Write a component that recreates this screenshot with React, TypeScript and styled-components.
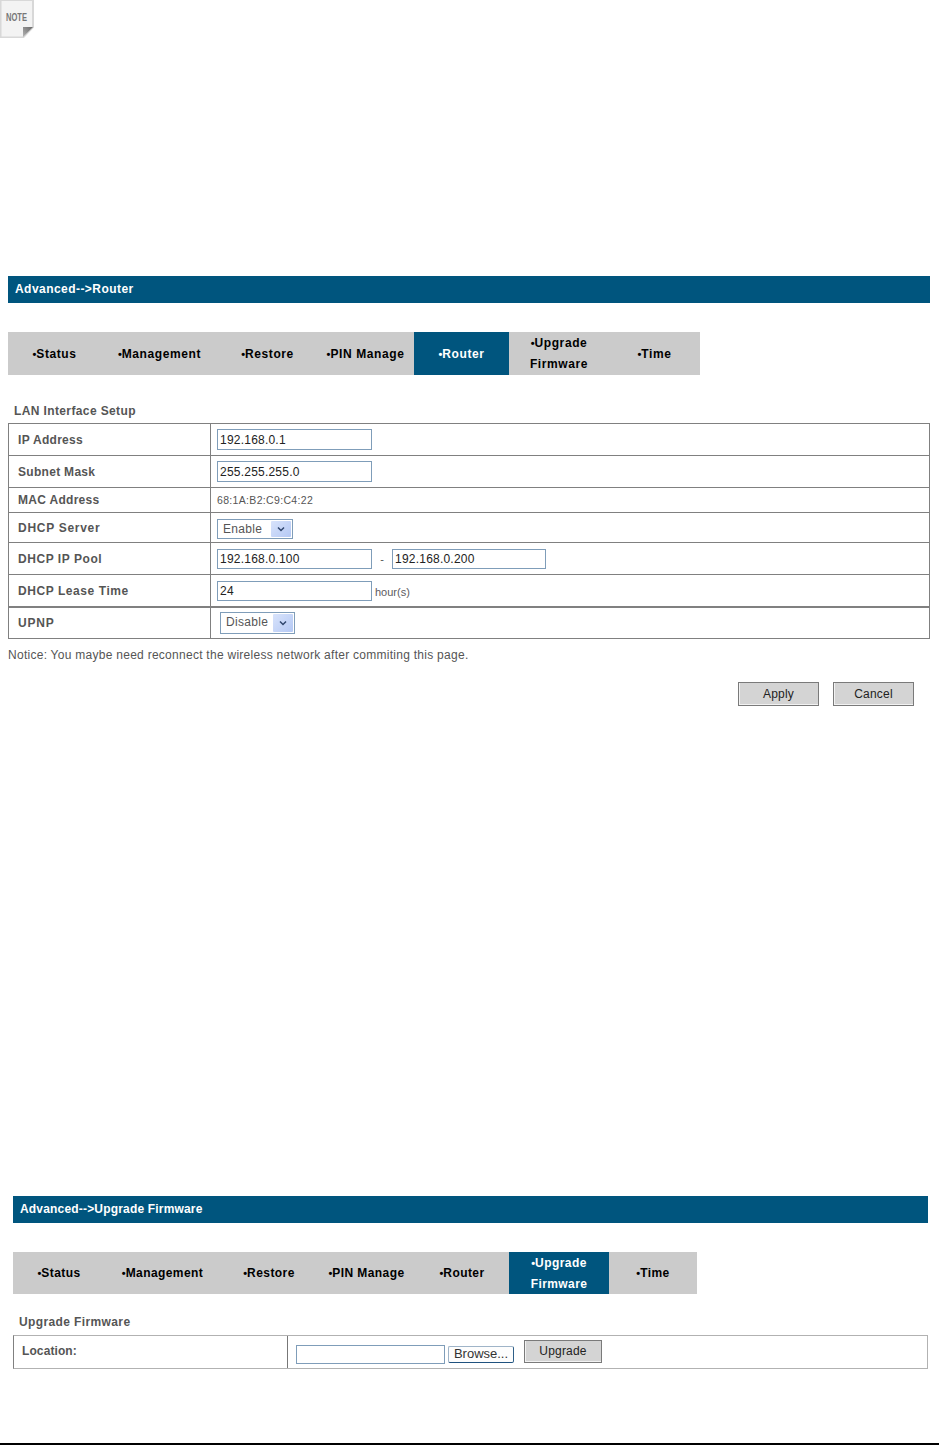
import React from "react";
import styled, { createGlobalStyle } from "styled-components";

const Global = createGlobalStyle`
  html, body { margin: 0; padding: 0; background: #fff; }
  body { font-family: "Liberation Sans", Arial, sans-serif; }
`;

const Page = styled.div`
  width: 939px;
  height: 1445px;
  display: flex;
  flex-direction: column;
  overflow: hidden;
`;

const NoteIcon = styled.svg`
  display: block;
  width: 34px;
  height: 38px;
  flex: none;
`;

const Section = styled.section<{ $left: number; $width: number; $top: number }>`
  margin-left: ${(p) => p.$left}px;
  margin-top: ${(p) => p.$top}px;
  width: ${(p) => p.$width}px;
`;

const Header = styled.div<{ $spacing: number }>`
  height: 27px;
  background: #00557e;
  color: #fff;
  font-size: 12px;
  font-weight: 700;
  line-height: 26px;
  padding-left: 7px;
  letter-spacing: ${(p) => p.$spacing}px;
`;

const TabBar = styled.nav<{ $width: number; $height: number; $spacing: number }>`
  margin-top: 29px;
  width: ${(p) => p.$width}px;
  height: ${(p) => p.$height}px;
  display: flex;
  background: #cbcbcb;
  letter-spacing: ${(p) => p.$spacing}px;
`;

const Tab = styled.div<{ $width: number; $active?: boolean }>`
  box-sizing: border-box;
  width: ${(p) => p.$width}px;
  flex: none;
  display: flex;
  align-items: center;
  justify-content: center;
  padding-top: 1px;
  text-align: center;
  font-size: 12px;
  font-weight: 700;
  line-height: 21px;
  color: ${(p) => (p.$active ? "#fff" : "#000")};
  background: ${(p) => (p.$active ? "#00557e" : "transparent")};
`;

const Bullet = styled.span`
  font-size: 11px;
  letter-spacing: 0;
`;

const SectionLabel = styled.div<{ $top: number; $bottom: number }>`
  margin-top: ${(p) => p.$top}px;
  margin-bottom: ${(p) => p.$bottom}px;
  padding-left: 6px;
  height: 16px;
  line-height: 16px;
  font-size: 12px;
  font-weight: 700;
  letter-spacing: 0.38px;
  color: #555;
`;

const FormTable = styled.div`
  border: 1px solid #808080;
  border-top: none;
`;

const Row = styled.div<{ $height: number; $thick?: boolean }>`
  display: grid;
  grid-template-columns: 202px 1fr;
  box-sizing: border-box;
  height: ${(p) => p.$height}px;
  border-top: ${(p) => (p.$thick ? 2 : 1)}px solid #808080;
`;

const LabelCell = styled.div<{ $spacing?: number }>`
  display: flex;
  align-items: center;
  padding-left: 9px;
  border-right: 1px solid #808080;
  font-size: 12px;
  font-weight: 700;
  letter-spacing: ${(p) => p.$spacing ?? 0.3}px;
  color: #555;
`;

const ValueCell = styled.div<{ $indent?: number }>`
  display: flex;
  align-items: center;
  padding-left: ${(p) => p.$indent ?? 6}px;
  font-size: 12px;
  color: #555;
`;

const TextField = styled.input<{ $width?: number; $height?: number; $top?: number }>`
  box-sizing: border-box;
  width: ${(p) => p.$width ?? 155}px;
  height: ${(p) => p.$height ?? 21}px;
  margin: ${(p) => p.$top ?? 0}px 0 0;
  padding: 0 2px;
  border: 1px solid #7f9db9;
  border-radius: 0;
  outline: none;
  background: #fff;
  font: 12px "Liberation Sans", Arial, sans-serif;
  letter-spacing: 0.22px;
  color: #222;
`;

const MacText = styled.span`
  font-size: 10.5px;
  letter-spacing: 0.33px;
  color: #555;
`;

const Dash = styled.span`
  width: 20px;
  text-align: center;
  font-size: 11px;
  color: #555;
`;

const Unit = styled.span`
  margin: 3px 0 0 3px;
  font-size: 11px;
  color: #5c5a60;
`;

const SelectBox = styled.div<{ $width: number; $height: number; $top: number }>`
  box-sizing: border-box;
  width: ${(p) => p.$width}px;
  height: ${(p) => p.$height}px;
  margin-top: ${(p) => p.$top}px;
  display: flex;
  align-items: stretch;
  justify-content: space-between;
  padding: 1px 1px 1px 5px;
  border: 1px solid #7f9db9;
  font-size: 12px;
  line-height: 16px;
  letter-spacing: 0.3px;
  color: #555;
`;

const SelectArrow = styled.span`
  width: 20px;
  display: flex;
  align-items: center;
  justify-content: center;
  border-radius: 1px;
  background: linear-gradient(135deg, #d8e3fb, #b4c8f4);
`;

const Chevron = styled.svg`
  width: 8px;
  height: 6px;
`;

const Notice = styled.p`
  margin: 8px 0 0;
  height: 16px;
  line-height: 16px;
  font-size: 12px;
  letter-spacing: 0.27px;
  color: #555;
`;

const ActionBar = styled.div`
  margin-top: 19px;
  padding-right: 16px;
  display: flex;
  justify-content: flex-end;
  gap: 14px;
`;

const GreyButton = styled.button<{ $width: number; $top?: number; $left?: number }>`
  box-sizing: border-box;
  width: ${(p) => p.$width}px;
  height: ${(p) => (p.$top ? 23 : 24)}px;
  margin: ${(p) => p.$top ?? 0}px 0 0 ${(p) => p.$left ?? 0}px;
  padding: 0 0 ${(p) => (p.$top ? 2 : 0)}px;
  border: 1px solid #7a7a7a;
  border-radius: 0;
  background: #d4d4d4;
  box-shadow: inset 1px 0 0 #f2f2f2, inset 0 -1px 0 #f2f2f2;
  font: 12px "Liberation Sans", Arial, sans-serif;
  letter-spacing: 0.2px;
  color: #222;
`;

const UpgradeTable = styled.div`
  box-sizing: border-box;
  height: 34px;
  display: grid;
  grid-template-columns: 274px 1fr;
  border: 1px solid #b2b2b2;
  border-left-color: #808080;
`;

const LocationCell = styled.div`
  display: flex;
  align-items: center;
  padding: 0 0 2px 8px;
  border-right: 1px solid #777;
  font-size: 12px;
  font-weight: 700;
  letter-spacing: 0.1px;
  color: #555;
`;

const UploadCell = styled.div`
  display: flex;
  align-items: flex-start;
  padding-left: 8px;
`;

const BrowseButton = styled.button`
  box-sizing: border-box;
  width: 66px;
  height: 17px;
  margin: 10px 0 0 3px;
  padding: 0 0 2px;
  border: 1px solid #9fb4c8;
  border-right-color: #2f5f88;
  border-bottom-color: #1f527f;
  border-radius: 2px;
  background: #fdfdfd;
  font: 13px "Liberation Sans", Arial, sans-serif;
  line-height: 13px;
  color: #333;
`;

const FooterRule = styled.div`
  margin-top: auto;
  height: 2px;
  background: #000;
`;

type TabDef = { label: string[]; width: number };

const routerTabs: TabDef[] = [
  { label: ["Status"], width: 93 },
  { label: ["Management"], width: 117 },
  { label: ["Restore"], width: 99 },
  { label: ["PIN Manage"], width: 97 },
  { label: ["Router"], width: 95 },
  { label: ["Upgrade", "Firmware"], width: 100 },
  { label: ["Time"], width: 91 },
];

const firmwareTabs: TabDef[] = [
  { label: ["Status"], width: 92 },
  { label: ["Management"], width: 115 },
  { label: ["Restore"], width: 98 },
  { label: ["PIN Manage"], width: 97 },
  { label: ["Router"], width: 94 },
  { label: ["Upgrade", "Firmware"], width: 100 },
  { label: ["Time"], width: 88 },
];

const Tabs = ({ tabs, active, width, height, spacing }: { tabs: TabDef[]; active: string; width: number; height: number; spacing: number }) => (
  <TabBar $width={width} $height={height} $spacing={spacing}>
    {tabs.map((t) => (
      <Tab key={t.label[0]} $width={t.width} $active={t.label[0] === active}>
        <span>
          <Bullet>•</Bullet>
          {t.label[0]}
          {t.label[1] && (
            <>
              <br />
              {t.label[1]}
            </>
          )}
        </span>
      </Tab>
    ))}
  </TabBar>
);

const Select = ({ value, width, height, top }: { value: string; width: number; height: number; top: number }) => (
  <SelectBox $width={width} $height={height} $top={top}>
    {value}
    <SelectArrow>
      <Chevron viewBox="0 0 8 6">
        <path d="M1 1.5 L4 4.5 L7 1.5" fill="none" stroke="#30466e" strokeWidth="1.5" />
      </Chevron>
    </SelectArrow>
  </SelectBox>
);

export default function App() {
  return (
    <Page>
      <Global />
      <NoteIcon viewBox="0 0 34 38">
        <defs>
          <linearGradient id="flap" x1="1" y1="0" x2="0" y2="1">
            <stop offset="0" stopColor="#666" />
            <stop offset="1" stopColor="#b5b5b5" />
          </linearGradient>
          <filter id="soft" x="-10%" y="-10%" width="120%" height="120%">
            <feGaussianBlur stdDeviation="0.4" />
          </filter>
        </defs>
        <path d="M0.5 0 H33 V27 L23 37.5 H0.5 Z" fill="#f3f3f3" stroke="#d8d8d8" strokeWidth="2" filter="url(#soft)" />
        <path d="M23 37 L33 27 H23 Z" fill="url(#flap)" />
        <text x="6" y="21" fontSize="10" fontWeight="700" fill="#777" fontFamily="Liberation Sans" textLength="21" lengthAdjust="spacingAndGlyphs">
          NOTE
        </text>
      </NoteIcon>

      <Section $left={8} $width={922} $top={238}>
        <Header $spacing={0.45}>Advanced--&gt;Router</Header>
        <Tabs tabs={routerTabs} active="Router" width={692} height={43} spacing={0.6} />
        <SectionLabel $top={28} $bottom={4}>LAN Interface Setup</SectionLabel>
        <FormTable>
          <Row $height={32}>
            <LabelCell>IP Address</LabelCell>
            <ValueCell><TextField readOnly value="192.168.0.1" /></ValueCell>
          </Row>
          <Row $height={32}>
            <LabelCell>Subnet Mask</LabelCell>
            <ValueCell><TextField readOnly value="255.255.255.0" /></ValueCell>
          </Row>
          <Row $height={25}>
            <LabelCell>MAC Address</LabelCell>
            <ValueCell><MacText>68:1A:B2:C9:C4:22</MacText></ValueCell>
          </Row>
          <Row $height={30}>
            <LabelCell $spacing={0.72}>DHCP Server</LabelCell>
            <ValueCell><Select value="Enable" width={76} height={20} top={3} /></ValueCell>
          </Row>
          <Row $height={32}>
            <LabelCell $spacing={0.55}>DHCP IP Pool</LabelCell>
            <ValueCell>
              <TextField readOnly value="192.168.0.100" $height={20} $top={1} />
              <Dash>-</Dash>
              <TextField readOnly value="192.168.0.200" $width={154} $height={20} $top={1} />
            </ValueCell>
          </Row>
          <Row $height={32}>
            <LabelCell $spacing={0.57}>DHCP Lease Time</LabelCell>
            <ValueCell>
              <TextField readOnly value="24" $height={20} $top={1} />
              <Unit>hour(s)</Unit>
            </ValueCell>
          </Row>
          <Row $height={32} $thick>
            <LabelCell $spacing={0.8}>UPNP</LabelCell>
            <ValueCell $indent={9}><Select value="Disable" width={75} height={22} top={0} /></ValueCell>
          </Row>
        </FormTable>
        <Notice>Notice: You maybe need reconnect the wireless network after commiting this page.</Notice>
        <ActionBar>
          <GreyButton $width={81}>Apply</GreyButton>
          <GreyButton $width={81}>Cancel</GreyButton>
        </ActionBar>
      </Section>

      <Section $left={13} $width={915} $top={490}>
        <Header $spacing={0.18}>Advanced--&gt;Upgrade Firmware</Header>
        <Tabs tabs={firmwareTabs} active="Upgrade" width={684} height={42} spacing={0.42} />
        <SectionLabel $top={20} $bottom={5}>Upgrade Firmware</SectionLabel>
        <UpgradeTable>
          <LocationCell>Location:</LocationCell>
          <UploadCell>
            <TextField readOnly value="" $width={149} $height={19} $top={9} />
            <BrowseButton>Browse...</BrowseButton>
            <GreyButton $width={78} $top={4} $left={10}>Upgrade</GreyButton>
          </UploadCell>
        </UpgradeTable>
      </Section>

      <FooterRule />
    </Page>
  );
}
